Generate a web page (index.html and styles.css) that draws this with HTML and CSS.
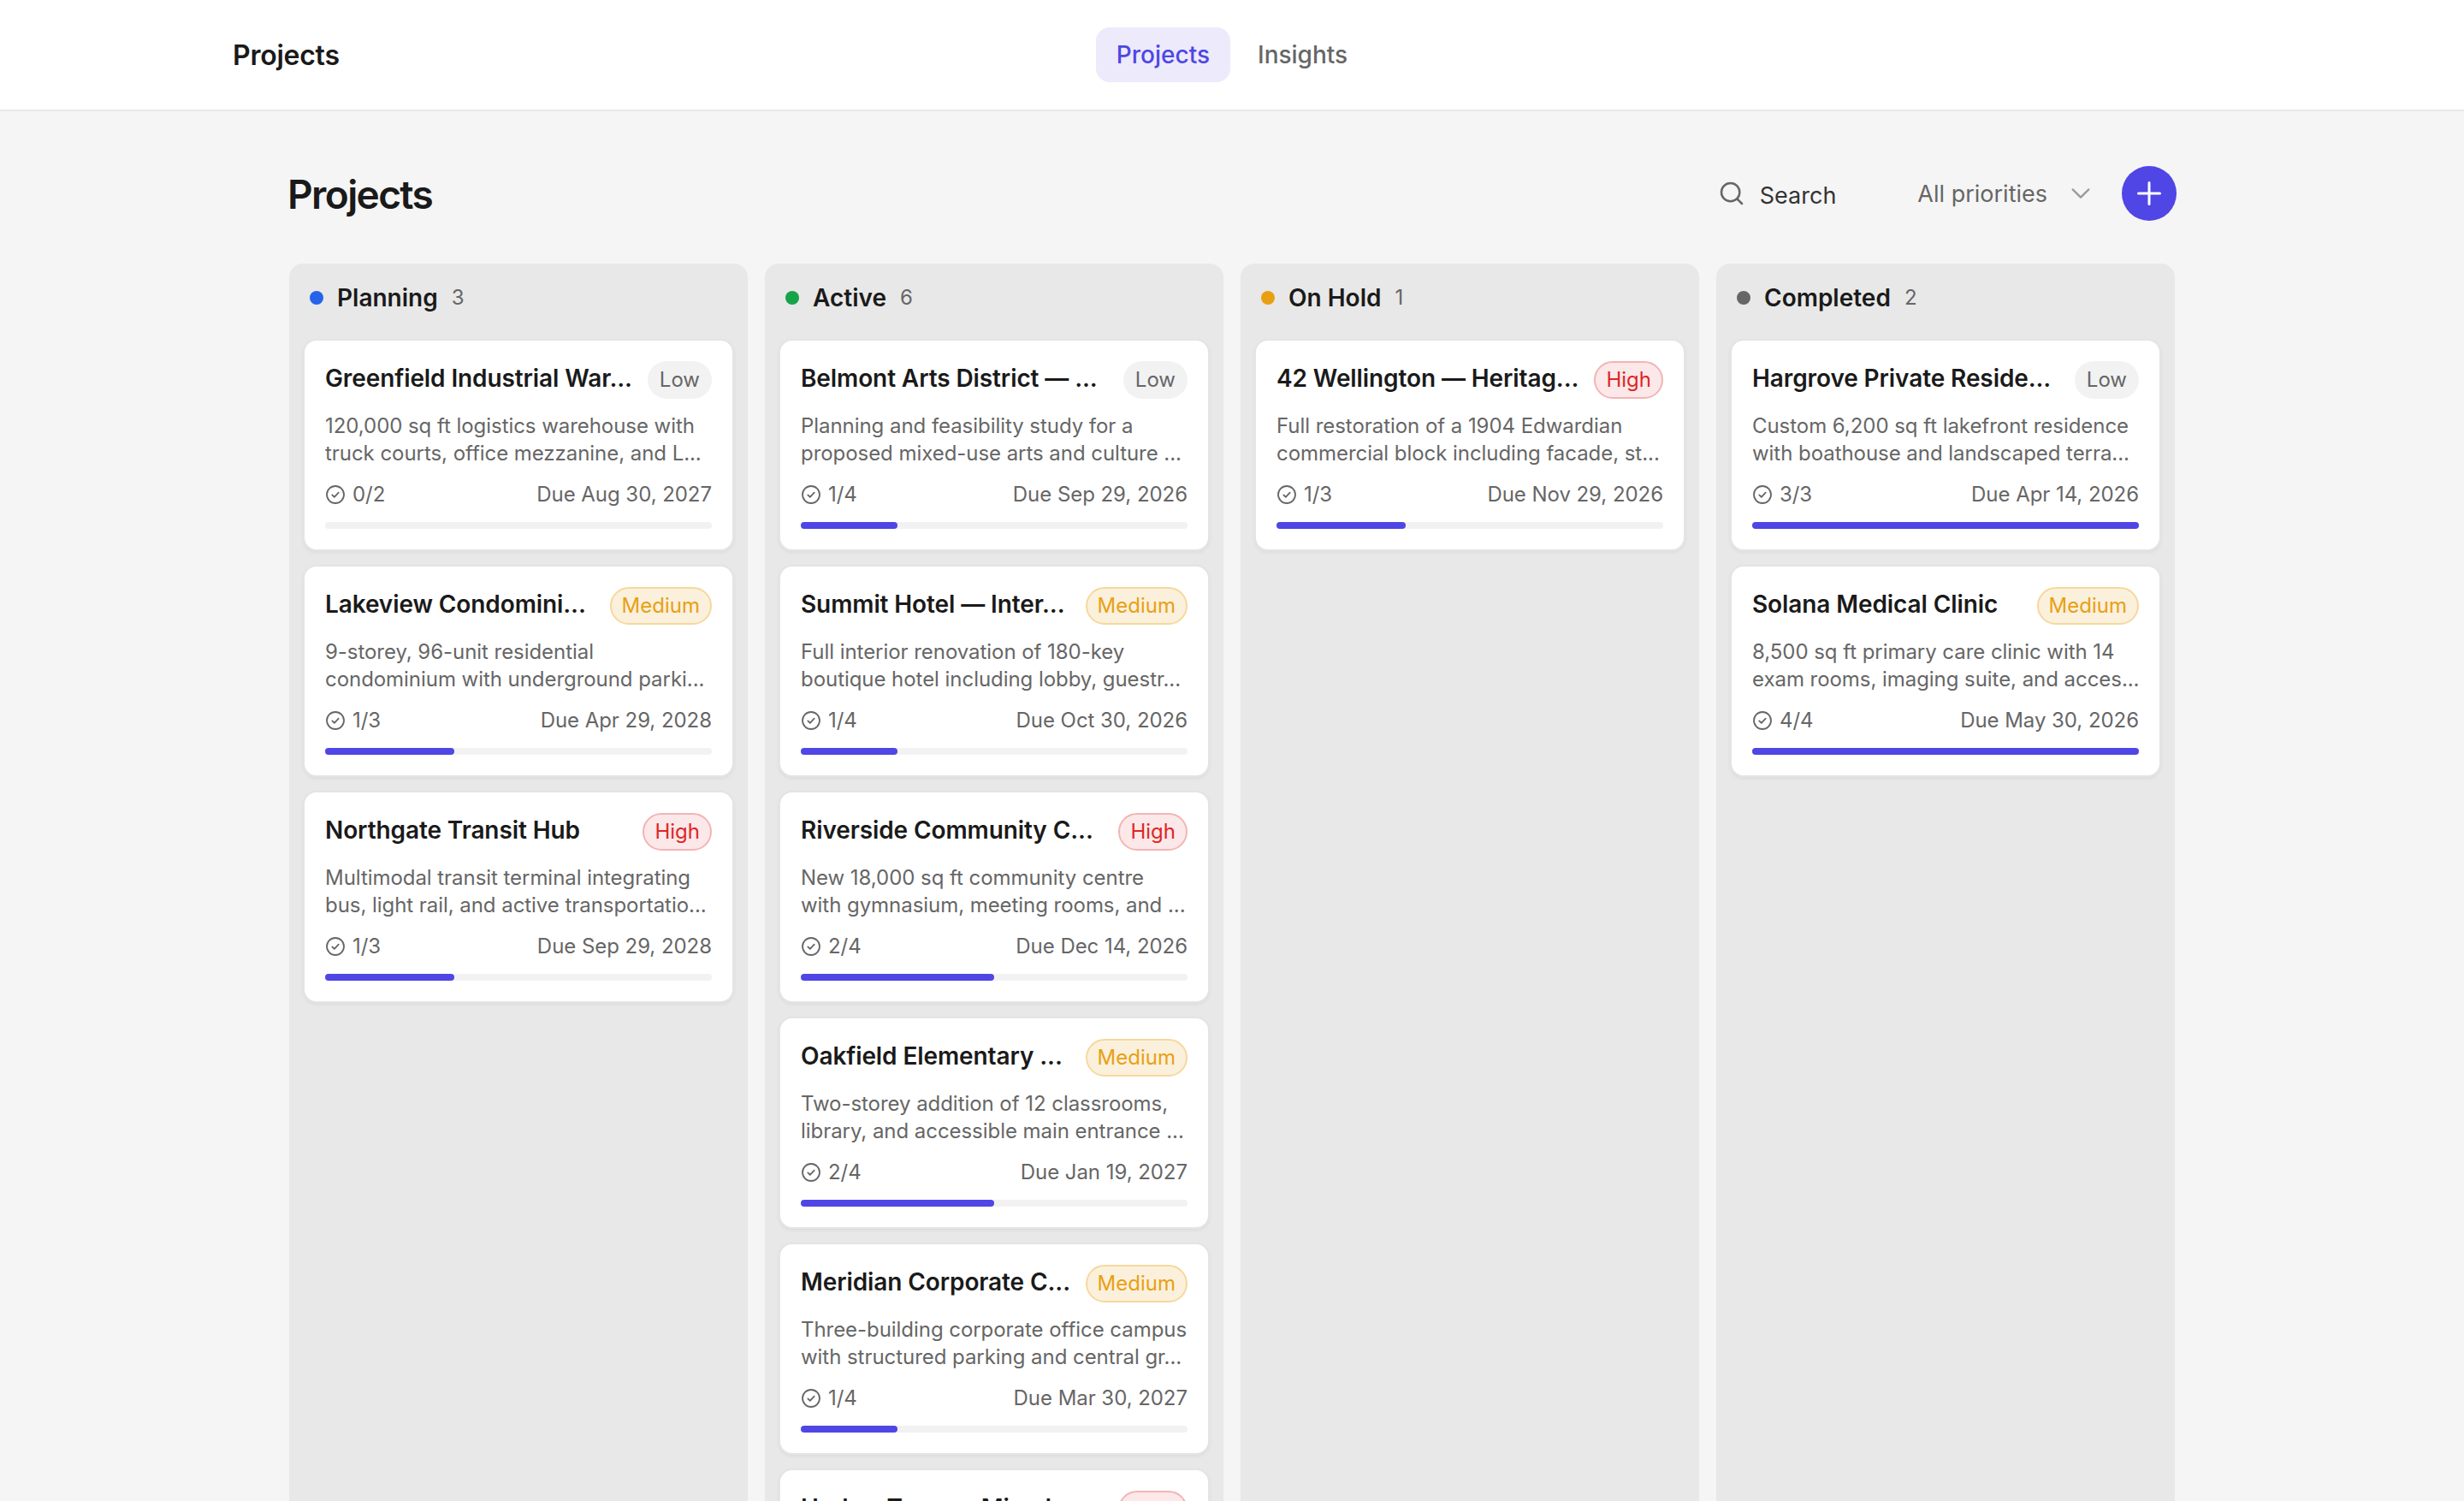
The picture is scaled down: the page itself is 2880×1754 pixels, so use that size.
FILE: index.html
```html
<!DOCTYPE html>
<html lang="en">

<head>
    <meta charset="UTF-8">
    <meta name="viewport" content="width=device-width, initial-scale=1.0">
    <title>Projects</title>
    <link rel="stylesheet" href="styles.css">
</head>

<body>
    <svg class="defs" width="0" height="0">
        <symbol id="check" viewBox="0 0 24 24">
            <circle cx="12" cy="12" r="10" fill="none" stroke="currentColor" stroke-width="1.8"></circle>
            <path d="M8.3 12.4l2.5 2.5 4.9-5.2" fill="none" stroke="currentColor" stroke-width="1.8" stroke-linecap="round" stroke-linejoin="round"></path>
        </symbol>
    </svg>

    <header class="topbar">
        <div class="brand">Projects</div>
        <nav class="tabs">
            <a class="tab active">Projects</a>
            <a class="tab">Insights</a>
        </nav>
    </header>

    <main class="page">
        <div class="page-head">
            <h1>Projects</h1>
            <div class="tools">
                <div class="search">
                    <svg width="32" height="32" viewBox="0 0 24 24" fill="none" stroke="#666" stroke-width="1.9" stroke-linecap="round">
                        <circle cx="11" cy="11" r="8"></circle>
                        <path d="M21 21l-4.3-4.3"></path>
                    </svg>
                    <span>Search</span>
                </div>
                <div class="filter">
                    <span>All priorities</span>
                    <svg width="32" height="32" viewBox="0 0 24 24" fill="none" stroke="#999" stroke-width="1.7" stroke-linecap="round" stroke-linejoin="round">
                        <path d="M5 8.5l7 7 7-7"></path>
                    </svg>
                </div>
                <button class="add">
                    <svg width="32" height="32" viewBox="0 0 32 32" fill="none" stroke="#fff" stroke-width="3" stroke-linecap="round">
                        <path d="M16 3.500v25M3.500 16h25"></path>
                    </svg>
                </button>
            </div>
        </div>

        <div class="board">
            <section class="column">
                <div class="col-head"><i class="dot blue"></i><b>Planning</b><span>3</span></div>
                <article class="card">
                    <div class="card-top"><h3>Greenfield Industrial War...</h3><span class="pill low">Low</span></div>
                    <p>120,000 sq ft logistics warehouse with<br>truck courts, office mezzanine, and L...</p>
                    <div class="meta"><span class="tasks"><svg width="24" height="24"><use href="#check"></use></svg>0/2</span><span>Due Aug 30, 2027</span></div>
                    <div class="bar"><div class="fill" style="width: 0%"></div></div>
                </article>
                <article class="card">
                    <div class="card-top"><h3>Lakeview Condomini...</h3><span class="pill medium">Medium</span></div>
                    <p>9-storey, 96-unit residential<br>condominium with underground parki...</p>
                    <div class="meta"><span class="tasks"><svg width="24" height="24"><use href="#check"></use></svg>1/3</span><span>Due Apr 29, 2028</span></div>
                    <div class="bar"><div class="fill" style="width: 33.33%"></div></div>
                </article>
                <article class="card">
                    <div class="card-top"><h3>Northgate Transit Hub</h3><span class="pill high">High</span></div>
                    <p>Multimodal transit terminal integrating<br>bus, light rail, and active transportatio...</p>
                    <div class="meta"><span class="tasks"><svg width="24" height="24"><use href="#check"></use></svg>1/3</span><span>Due Sep 29, 2028</span></div>
                    <div class="bar"><div class="fill" style="width: 33.33%"></div></div>
                </article>
            </section>

            <section class="column">
                <div class="col-head"><i class="dot green"></i><b>Active</b><span>6</span></div>
                <article class="card">
                    <div class="card-top"><h3>Belmont Arts District — ...</h3><span class="pill low">Low</span></div>
                    <p>Planning and feasibility study for a<br>proposed mixed-use arts and culture ...</p>
                    <div class="meta"><span class="tasks"><svg width="24" height="24"><use href="#check"></use></svg>1/4</span><span>Due Sep 29, 2026</span></div>
                    <div class="bar"><div class="fill" style="width: 25%"></div></div>
                </article>
                <article class="card">
                    <div class="card-top"><h3>Summit Hotel — Inter...</h3><span class="pill medium">Medium</span></div>
                    <p>Full interior renovation of 180-key<br>boutique hotel including lobby, guestr...</p>
                    <div class="meta"><span class="tasks"><svg width="24" height="24"><use href="#check"></use></svg>1/4</span><span>Due Oct 30, 2026</span></div>
                    <div class="bar"><div class="fill" style="width: 25%"></div></div>
                </article>
                <article class="card">
                    <div class="card-top"><h3>Riverside Community C...</h3><span class="pill high">High</span></div>
                    <p>New 18,000 sq ft community centre<br>with gymnasium, meeting rooms, and ...</p>
                    <div class="meta"><span class="tasks"><svg width="24" height="24"><use href="#check"></use></svg>2/4</span><span>Due Dec 14, 2026</span></div>
                    <div class="bar"><div class="fill" style="width: 50%"></div></div>
                </article>
                <article class="card">
                    <div class="card-top"><h3>Oakfield Elementary ...</h3><span class="pill medium">Medium</span></div>
                    <p>Two-storey addition of 12 classrooms,<br>library, and accessible main entrance ...</p>
                    <div class="meta"><span class="tasks"><svg width="24" height="24"><use href="#check"></use></svg>2/4</span><span>Due Jan 19, 2027</span></div>
                    <div class="bar"><div class="fill" style="width: 50%"></div></div>
                </article>
                <article class="card">
                    <div class="card-top"><h3>Meridian Corporate C...</h3><span class="pill medium">Medium</span></div>
                    <p>Three-building corporate office campus<br>with structured parking and central gr...</p>
                    <div class="meta"><span class="tasks"><svg width="24" height="24"><use href="#check"></use></svg>1/4</span><span>Due Mar 30, 2027</span></div>
                    <div class="bar"><div class="fill" style="width: 25%"></div></div>
                </article>
                <article class="card">
                    <div class="card-top"><h3>Harbor Terrace Mixed-...</h3><span class="pill high">High</span></div>
                </article>
            </section>

            <section class="column">
                <div class="col-head"><i class="dot amber"></i><b>On Hold</b><span>1</span></div>
                <article class="card">
                    <div class="card-top"><h3>42 Wellington — Heritag...</h3><span class="pill high">High</span></div>
                    <p>Full restoration of a 1904 Edwardian<br>commercial block including facade, st...</p>
                    <div class="meta"><span class="tasks"><svg width="24" height="24"><use href="#check"></use></svg>1/3</span><span>Due Nov 29, 2026</span></div>
                    <div class="bar"><div class="fill" style="width: 33.33%"></div></div>
                </article>
            </section>

            <section class="column">
                <div class="col-head"><i class="dot gray"></i><b>Completed</b><span>2</span></div>
                <article class="card">
                    <div class="card-top"><h3>Hargrove Private Reside...</h3><span class="pill low">Low</span></div>
                    <p>Custom 6,200 sq ft lakefront residence<br>with boathouse and landscaped terra...</p>
                    <div class="meta"><span class="tasks"><svg width="24" height="24"><use href="#check"></use></svg>3/3</span><span>Due Apr 14, 2026</span></div>
                    <div class="bar"><div class="fill" style="width: 100%"></div></div>
                </article>
                <article class="card">
                    <div class="card-top"><h3>Solana Medical Clinic</h3><span class="pill medium">Medium</span></div>
                    <p>8,500 sq ft primary care clinic with 14<br>exam rooms, imaging suite, and acces...</p>
                    <div class="meta"><span class="tasks"><svg width="24" height="24"><use href="#check"></use></svg>4/4</span><span>Due May 30, 2026</span></div>
                    <div class="bar"><div class="fill" style="width: 100%"></div></div>
                </article>
            </section>
        </div>
    </main>
</body>

</html>
```

FILE: styles.css
```css
* {
    box-sizing: border-box;
}

html,
body {
    height: 100%;
}

body {
    margin: 0;
    overflow: hidden;
    display: flex;
    flex-direction: column;
    background-color: #f5f5f5;
    color: #1a1a1a;
    font-family: Inter, "Liberation Sans", sans-serif;
}

.defs {
    display: none;
}

.topbar {
    flex: none;
    display: grid;
    grid-template-columns: 1fr auto 1fr;
    align-items: center;
    height: 130px;
    padding: 0 272px;
    background-color: #fff;
    border-bottom: 2px solid #e8e8e8;
}

.brand {
    font-size: 32px;
    font-weight: 600;
    letter-spacing: -0.24px;
}

.tabs {
    display: flex;
    gap: 8px;
}

.tab {
    padding: 0 24px;
    height: 64px;
    line-height: 64px;
    border-radius: 16px;
    font-size: 28px;
    font-weight: 500;
    color: #666;
}

.tab.active {
    background-color: #eceafb;
    color: #4f46e5;
}

.page {
    flex: 1;
    min-height: 0;
    display: flex;
    flex-direction: column;
    padding: 0 338px;
}

.page-head {
    flex: none;
    display: flex;
    align-items: center;
    justify-content: space-between;
    height: 178px;
    padding-top: 14px;
}

h1 {
    margin: 2px 0 0 -2px;
    font-size: 46px;
    font-weight: 600;
    letter-spacing: -1.6px;
}

.tools {
    display: flex;
    align-items: center;
    margin-right: -2px;
}

.search {
    display: flex;
    align-items: center;
    gap: 17px;
    margin-right: 95px;
    font-size: 27px;
    color: #333;
}

.search span {
    padding-top: 4px;
}

.filter {
    display: flex;
    align-items: center;
    gap: 23px;
    margin-right: 32px;
    font-size: 27px;
    color: #666;
}

.add {
    display: flex;
    align-items: center;
    justify-content: center;
    width: 64px;
    height: 64px;
    padding: 0;
    border: none;
    border-radius: 50%;
    background-color: #4f46e5;
}

.board {
    flex: 1;
    min-height: 0;
    display: grid;
    grid-template-columns: repeat(4, 536px);
    gap: 20px;
}

.column {
    display: flex;
    flex-direction: column;
    gap: 16px;
    min-height: 0;
    overflow: hidden;
    padding: 0 16px;
    border-radius: 16px 16px 0 0;
    background-color: #e8e8e8;
}

.col-head {
    flex: none;
    display: flex;
    align-items: center;
    height: 72px;
    padding-top: 7px;
    padding-left: 8px;
    font-size: 28px;
}

.col-head b {
    font-weight: 600;
}

.col-head span {
    margin-left: 16px;
    font-size: 24px;
    color: #666;
}

.dot {
    width: 16px;
    height: 16px;
    margin-right: 16px;
    border-radius: 50%;
}

.blue {
    background-color: #2563eb;
}

.green {
    background-color: #16a34a;
}

.amber {
    background-color: #e8a013;
}

.gray {
    background-color: #666;
}

.card {
    flex: none;
    height: 248px;
    padding: 24px 24px 0;
    border: 2px solid #e4e4e4;
    border-radius: 16px;
    background-color: #fff;
    box-shadow: 0 2px 4px rgba(0, 0, 0, 0.05);
}

.card-top {
    display: flex;
    align-items: center;
    justify-content: space-between;
    gap: 16px;
    height: 44px;
}

h3 {
    margin: -4px 0 0;
    white-space: nowrap;
    font-size: 28px;
    font-weight: 600;
    letter-spacing: -0.1px;
}

.pill {
    flex: none;
    height: 44px;
    line-height: 40px;
    padding: 0 12px;
    border: 2px solid transparent;
    border-radius: 22px;
    font-size: 24px;
}

.low {
    background-color: #f2f2f2;
    color: #666;
}

.medium {
    background-color: #fbf0dc;
    border-color: #f6d89c;
    color: #e8a013;
}

.high {
    background-color: #fce8e8;
    border-color: #f3b4b4;
    color: #dc2626;
}

p {
    margin: 16px 0 0;
    white-space: nowrap;
    font-size: 24px;
    line-height: 32px;
    letter-spacing: -0.05px;
    color: #666;
}

.meta {
    display: flex;
    align-items: center;
    justify-content: space-between;
    margin-top: 16px;
    font-size: 24px;
    line-height: 32px;
    letter-spacing: -0.05px;
    color: #666;
}

.tasks {
    display: flex;
    align-items: center;
    gap: 8px;
}

.bar {
    height: 8px;
    margin-top: 16px;
    border-radius: 4px;
    background-color: #f2f2f2;
}

.fill {
    height: 100%;
    border-radius: 4px;
    background-color: #4f46e5;
}
```
